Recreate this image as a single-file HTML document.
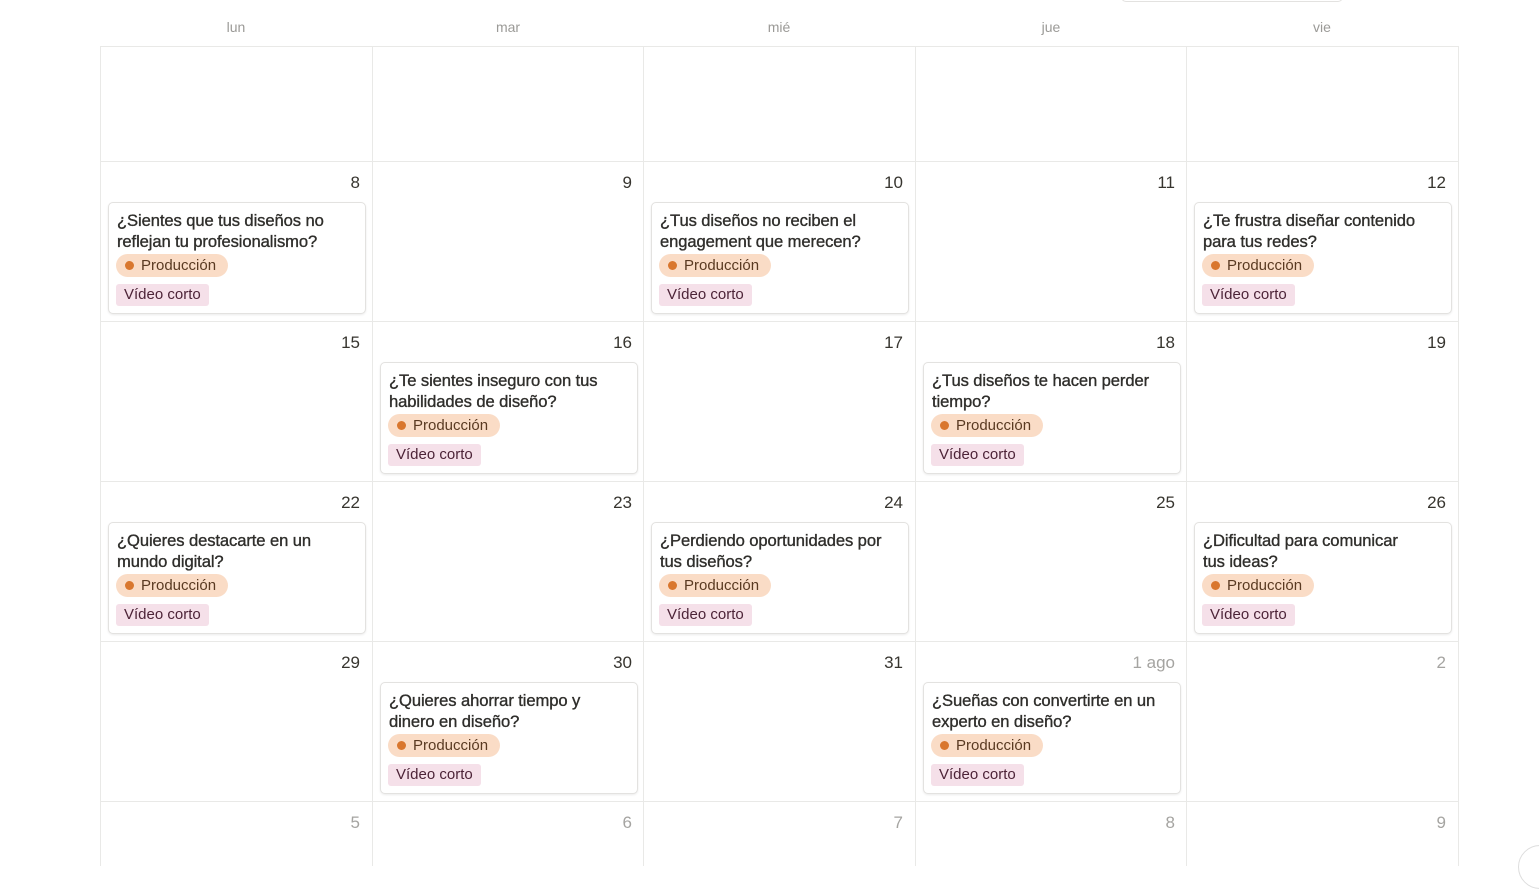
<!DOCTYPE html>
<html><head><meta charset="utf-8"><style>
*{margin:0;padding:0;box-sizing:border-box}
body{width:1539px;height:866px;overflow:hidden;background:#fff;font-family:"Liberation Sans",sans-serif;position:relative;color:#37352f}
.h{position:absolute;top:19px;font-size:14px;color:#9b9a97;text-align:center;width:272px}
.vl{position:absolute;top:46px;bottom:0;width:1px;background:#e9e9e7}
.hl{position:absolute;left:100px;width:1359px;height:1px;background:#e9e9e7}
.d{position:absolute;font-size:17px;color:#37352f;text-align:right;width:100px}
.d.g{color:#a5a4a1}
.c{position:absolute;width:258px;height:112px;border:1px solid #e3e2e0;border-radius:5px;box-shadow:0 1px 2px rgba(15,15,15,.08);background:#fff;padding:7px 4px 0 8px}
.t{font-size:16.6px;line-height:21px;color:#2f2e2b;letter-spacing:-0.1px;-webkit-text-stroke:0.35px #2f2e2b;white-space:nowrap}
.p{position:absolute;left:7px;top:51px;height:23px;border-radius:12px;background:#fadcc6;font-size:15px;line-height:23px;padding:0 12px 0 25px;color:#5a3a22}
.p:before{content:"";position:absolute;left:9px;top:7px;width:9px;height:9px;border-radius:50%;background:#d9772e}
.v{position:absolute;left:7px;top:81px;height:22px;border-radius:3px;background:#f5e0e9;font-size:15px;line-height:22px;padding:0 8px;color:#4c2337}
</style></head><body>
<div style="position:absolute;left:1121px;top:-10px;width:222px;height:12px;border:1px solid #e3e2e0;border-radius:5px"></div>
<div class="h" style="left:100px">lun</div>
<div class="h" style="left:372px">mar</div>
<div class="h" style="left:643px">mié</div>
<div class="h" style="left:915px">jue</div>
<div class="h" style="left:1186px">vie</div>
<div class="vl" style="left:100px"></div><div class="vl" style="left:372px"></div><div class="vl" style="left:643px"></div><div class="vl" style="left:915px"></div><div class="vl" style="left:1186px"></div><div class="vl" style="left:1458px"></div>
<div class="hl" style="top:46px"></div><div class="hl" style="top:161px"></div><div class="hl" style="top:321px"></div><div class="hl" style="top:481px"></div><div class="hl" style="top:641px"></div><div class="hl" style="top:801px"></div>

<div class="d" style="left:260px;top:173px">8</div>
<div class="d" style="left:532px;top:173px">9</div>
<div class="d" style="left:803px;top:173px">10</div>
<div class="d" style="left:1075px;top:173px">11</div>
<div class="d" style="left:1346px;top:173px">12</div>
<div class="d" style="left:260px;top:333px">15</div>
<div class="d" style="left:532px;top:333px">16</div>
<div class="d" style="left:803px;top:333px">17</div>
<div class="d" style="left:1075px;top:333px">18</div>
<div class="d" style="left:1346px;top:333px">19</div>
<div class="d" style="left:260px;top:493px">22</div>
<div class="d" style="left:532px;top:493px">23</div>
<div class="d" style="left:803px;top:493px">24</div>
<div class="d" style="left:1075px;top:493px">25</div>
<div class="d" style="left:1346px;top:493px">26</div>
<div class="d" style="left:260px;top:653px">29</div>
<div class="d" style="left:532px;top:653px">30</div>
<div class="d" style="left:803px;top:653px">31</div>
<div class="d g" style="left:1075px;top:653px">1 ago</div>
<div class="d g" style="left:1346px;top:653px">2</div>
<div class="d g" style="left:260px;top:813px">5</div>
<div class="d g" style="left:532px;top:813px">6</div>
<div class="d g" style="left:803px;top:813px">7</div>
<div class="d g" style="left:1075px;top:813px">8</div>
<div class="d g" style="left:1346px;top:813px">9</div>

<div class="c" style="left:108px;top:202px"><div class="t">¿Sientes que tus diseños no<br>reflejan tu profesionalismo?</div><div class="p">Producción</div><div class="v">Vídeo corto</div></div>
<div class="c" style="left:651px;top:202px"><div class="t">¿Tus diseños no reciben el<br>engagement que merecen?</div><div class="p">Producción</div><div class="v">Vídeo corto</div></div>
<div class="c" style="left:1194px;top:202px"><div class="t">¿Te frustra diseñar contenido<br>para tus redes?</div><div class="p">Producción</div><div class="v">Vídeo corto</div></div>
<div class="c" style="left:380px;top:362px"><div class="t">¿Te sientes inseguro con tus<br>habilidades de diseño?</div><div class="p">Producción</div><div class="v">Vídeo corto</div></div>
<div class="c" style="left:923px;top:362px"><div class="t">¿Tus diseños te hacen perder<br>tiempo?</div><div class="p">Producción</div><div class="v">Vídeo corto</div></div>
<div class="c" style="left:108px;top:522px"><div class="t">¿Quieres destacarte en un<br>mundo digital?</div><div class="p">Producción</div><div class="v">Vídeo corto</div></div>
<div class="c" style="left:651px;top:522px"><div class="t">¿Perdiendo oportunidades por<br>tus diseños?</div><div class="p">Producción</div><div class="v">Vídeo corto</div></div>
<div class="c" style="left:1194px;top:522px"><div class="t">¿Dificultad para comunicar<br>tus ideas?</div><div class="p">Producción</div><div class="v">Vídeo corto</div></div>
<div class="c" style="left:380px;top:682px"><div class="t">¿Quieres ahorrar tiempo y<br>dinero en diseño?</div><div class="p">Producción</div><div class="v">Vídeo corto</div></div>
<div class="c" style="left:923px;top:682px"><div class="t">¿Sueñas con convertirte en un<br>experto en diseño?</div><div class="p">Producción</div><div class="v">Vídeo corto</div></div>

<div style="position:absolute;left:1518px;top:845px;width:44px;height:44px;border-radius:50%;border:1px solid #ddd;background:#fff"></div>
</body></html>
